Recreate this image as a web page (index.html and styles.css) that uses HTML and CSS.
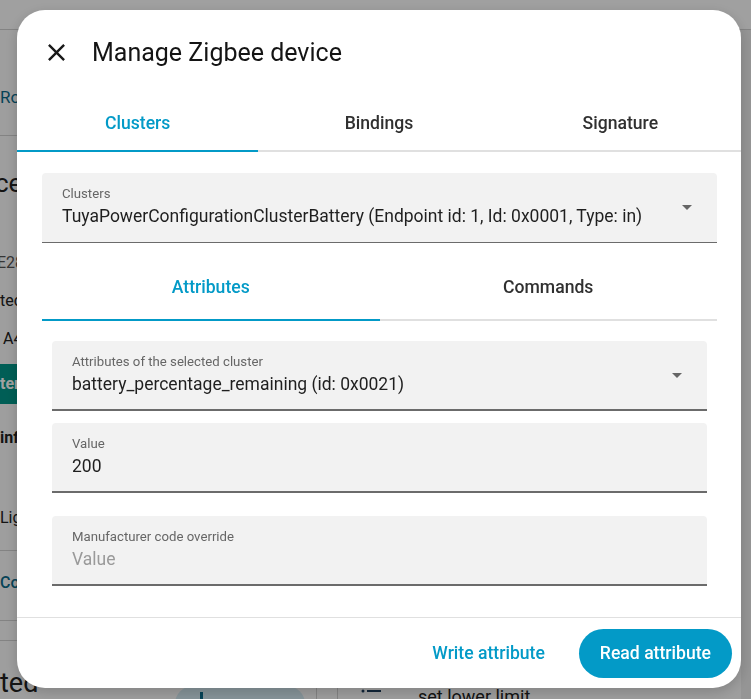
FILE: index.html
```html
<!DOCTYPE html>
<html lang="en">
<head>
    <meta charset="UTF-8">
    <meta name="viewport" content="width=device-width, initial-scale=1.0">
    <title>Manage Zigbee device</title>
    <link rel="stylesheet" href="styles.css">
</head>
<body>
    <!-- device page behind the dialog -->
    <div class="page">
        <div class="topbar"></div>
        <div class="page-body">
            <div class="side">
                <div class="crumb"><span class="link">Room</span></div>
                <div class="side-title">ce</div>
                <div class="side-text muted">E28</div>
                <div class="side-text">tec</div>
                <div class="side-text indent">A4</div>
                <div class="side-btn">ter</div>
                <div class="side-text strong">inf</div>
                <div class="side-text gap">Lig</div>
                <div class="side-rule"></div>
                <div class="side-text link">Co</div>
                <div class="side-rule wide"></div>
                <div class="side-rule narrow"></div>
                <div class="bottom-row">
                    <div class="side-big">ted</div>
                    <div class="pill"><span class="pill-mark"></span></div>
                    <div class="vline"></div>
                    <div class="row-item">
                        <svg class="row-icon" viewBox="0 0 24 24" width="24" height="24"><circle cx="3" cy="8" r="1.5"/><rect x="7" y="7" width="14" height="2"/></svg>
                        <span>set lower limit</span>
                    </div>
                </div>
            </div>
            <div class="edge"></div>
        </div>
    </div>

    <div class="scrim">
        <div class="dialog">
            <div class="dialog-header">
                <button class="icon-btn" aria-label="Close">
                    <svg viewBox="0 0 24 24" width="29" height="29"><path d="M19 6.41 17.59 5 12 10.59 6.41 5 5 6.41 10.59 12 5 17.59 6.41 19 12 13.41 17.59 19 19 17.59 13.41 12z"/></svg>
                </button>
                <h2>Manage Zigbee device</h2>
            </div>

            <div class="tabs main-tabs">
                <div class="tab active">Clusters</div>
                <div class="tab">Bindings</div>
                <div class="tab">Signature</div>
            </div>

            <div class="dialog-content">
                <div class="field select">
                    <label>Clusters</label>
                    <div class="field-value">TuyaPowerConfigurationClusterBattery (Endpoint id: 1, Id: 0x0001, Type: in)</div>
                    <span class="caret"></span>
                </div>

                <div class="tabs sub-tabs">
                    <div class="tab active">Attributes</div>
                    <div class="tab">Commands</div>
                </div>

                <div class="attr-panel">
                    <div class="field select">
                        <label>Attributes of the selected cluster</label>
                        <div class="field-value">battery_percentage_remaining (id: 0x0021)</div>
                        <span class="caret"></span>
                    </div>
                    <div class="field">
                        <label>Value</label>
                        <div class="field-value">200</div>
                    </div>
                    <div class="field">
                        <label>Manufacturer code override</label>
                        <div class="field-value placeholder">Value</div>
                    </div>
                </div>
            </div>

            <div class="dialog-actions">
                <button class="btn text">Write attribute</button>
                <button class="btn filled">Read attribute</button>
            </div>
        </div>
    </div>
</body>
</html>
```

FILE: styles.css
```css
body {
    margin: 0;
    font-family: Roboto, "Noto Sans", sans-serif;
    background-color: #fafafa;
    color: #212121;
    overflow: hidden;
}

/* ---- page underneath ---- */

.page {
    height: 699px;
}

.topbar {
    height: 29px;
    border-bottom: 1px solid #d0d0d0;
    background-color: #fdfdfd;
}

.page-body {
    display: flex;
}

.side {
    flex: 1;
}

.crumb {
    height: 106px;
    display: flex;
    align-items: flex-end;
    padding-bottom: 27px;
    box-sizing: border-box;
    border-bottom: 1px solid #d0d0d0;
    font-size: 17px;
    line-height: 22px;
}

.link {
    color: #0b6b8a;
}

.side-title {
    margin-top: 30px;
    margin-left: -5px;
    font-size: 26px;
    line-height: 34px;
}

.side-text {
    margin-top: 18px;
    font-size: 16px;
    line-height: 20px;
}

.side-text.muted {
    margin-top: 53px;
    margin-left: -3px;
    color: #555;
}

.side-text.indent {
    padding-left: 3px;
}

.side-text.strong {
    margin-top: 24px;
    font-weight: 700;
}

.side-text.gap {
    margin-top: 60px;
}

.side-text.link {
    margin-top: 22px;
    font-weight: 500;
}

.side-btn {
    margin-top: 15px;
    width: 60px;
    height: 40px;
    line-height: 40px;
    background-color: #009688;
    color: #fff;
    font-weight: 700;
    font-size: 16px;
}

.side-rule {
    margin-top: 22px;
    border-top: 1px solid #d0d0d0;
    width: 300px;
}

.side-rule.wide {
    margin-top: 27px;
}

.side-rule.narrow {
    margin-top: 19px;
}

.bottom-row {
    margin-top: 24px;
    display: flex;
    align-items: flex-start;
}

.side-big {
    width: 175px;
    font-size: 27px;
    line-height: 36px;
}

.pill {
    margin-top: 21px;
    width: 130px;
    height: 36px;
    border-radius: 18px;
    background-color: #d4eaf2;
}

.pill-mark {
    display: block;
    margin: 6px 0 0 25px;
    width: 3px;
    height: 10px;
    background-color: #0b6b8a;
}

.vline {
    margin: 21px 0 0 11px;
    width: 1px;
    height: 30px;
    background-color: #d0d0d0;
}

.row-item {
    margin: 21px 0 0 20px;
    display: flex;
    align-items: center;
    gap: 34px;
    padding-left: 22px;
    border-left: 1px solid #d0d0d0;
    font-size: 18px;
    line-height: 22px;
}

.row-icon {
    fill: #1b3b5a;
    margin-top: -4px;
}

.edge {
    width: 10px;
    background-color: #ececec;
}

/* ---- dialog ---- */

.scrim {
    position: fixed;
    inset: 0;
    background-color: rgba(0, 0, 0, 0.37);
    padding: 10px 0 0 17px;
}

.dialog {
    width: 724px;
    height: 678px;
    background-color: #fff;
    border-radius: 28px;
    box-shadow: 0 4px 14px rgba(0, 0, 0, 0.18);
    display: flex;
    flex-direction: column;
    overflow: hidden;
}

.dialog-header {
    height: 84px;
    display: flex;
    align-items: center;
    padding-left: 25px;
    box-sizing: border-box;
}

.icon-btn {
    width: 29px;
    height: 29px;
    padding: 0;
    border: none;
    background: none;
    fill: #1a1a1a;
    margin-right: 21px;
}

.dialog-header h2 {
    margin: 0;
    font-size: 25px;
    font-weight: 400;
    color: #141414;
}

.tabs {
    display: flex;
    border-bottom: 2px solid #e0e0e0;
}

.tab {
    flex: 1;
    text-align: center;
    font-size: 17.6px;
    font-weight: 500;
    color: #303030;
    margin-bottom: -2px;
    border-bottom: 2px solid transparent;
}

.tab.active {
    color: #039ac7;
    border-bottom-color: #039ac7;
}

.main-tabs .tab {
    height: 58px;
    line-height: 58px;
    box-sizing: border-box;
}

.dialog-content {
    flex: 1;
    padding: 21px 24px 0 25px;
}

.field {
    position: relative;
    height: 70px;
    box-sizing: border-box;
    padding: 13px 20px 0;
    background-color: #f2f2f2;
    border-radius: 4px 4px 0 0;
    border-bottom: 1px solid #6b6b6b;
}

.field label {
    display: block;
    font-size: 13.2px;
    line-height: 16px;
    color: #666;
}

.field-value {
    margin-top: 2px;
    font-size: 17.5px;
    line-height: 24px;
    color: #1f1f1f;
}

.field-value.placeholder {
    color: #9a9a9a;
}

.caret {
    position: absolute;
    right: 25px;
    top: 32px;
    border-left: 5px solid transparent;
    border-right: 5px solid transparent;
    border-top: 5px solid #666;
}

.sub-tabs .tab {
    height: 78px;
    line-height: 88px;
    box-sizing: border-box;
}

.attr-panel {
    padding: 20px 10px 0;
    display: flex;
    flex-direction: column;
    gap: 12px;
}

.attr-panel .field {
    border-bottom-width: 2px;
}

.attr-panel .field:last-child {
    margin-top: 11px;
}

.dialog-actions {
    height: 70px;
    border-top: 1px solid #e0e0e0;
    display: flex;
    align-items: center;
    justify-content: flex-end;
    gap: 13px;
    padding: 0 9px 0 0;
}

.btn {
    font-family: Roboto, sans-serif;
    font-size: 17.6px;
    font-weight: 500;
    border: none;
    cursor: pointer;
    height: 49px;
    padding: 0 21px;
    border-radius: 25px;
}

.btn.text {
    background: none;
    color: #039ac7;
}

.btn.filled {
    background-color: #039ac7;
    color: #fff;
}
```
